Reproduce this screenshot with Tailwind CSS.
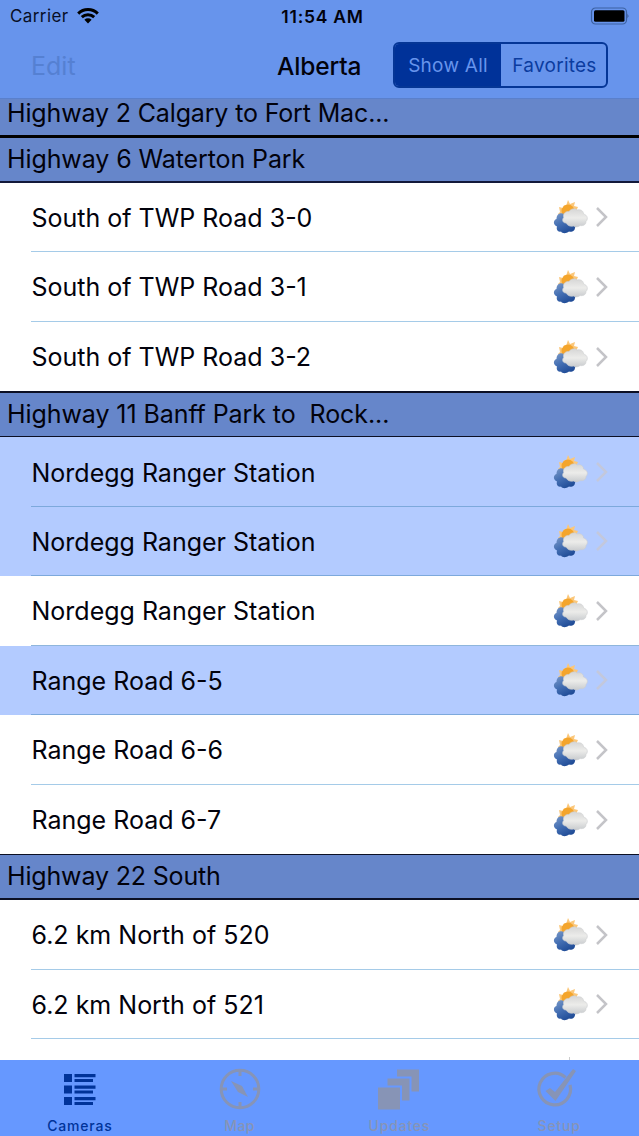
<!DOCTYPE html>
<html lang="en">
<head>
<meta charset="utf-8">
<title>Alberta</title>
<script src="https://cdn.jsdelivr.net/npm/@tailwindcss/browser@4"></script>
</head>
<body class="w-[639px] h-[1136px] overflow-hidden flex flex-col bg-white text-[#02020c] font-[Inter,sans-serif] text-[25px] leading-[30px]">
<svg class="absolute w-0 h-0">
  <defs>
    <linearGradient id="blue" x1="0" y1="0" x2="0.6" y2="1"><stop offset="0" stop-color="#7d9bc8"/><stop offset=".5" stop-color="#4570b4"/><stop offset="1" stop-color="#1f4b96"/></linearGradient>
    <linearGradient id="white" x1="0" y1="0" x2="0" y2="1"><stop offset="0" stop-color="#d6d6d6"/><stop offset=".5" stop-color="#ececea"/><stop offset="1" stop-color="#c8cbce"/></linearGradient>
    <symbol id="weather" viewBox="0 0 36 36">
      <path d="M16 1l2 4 5-2-1 4 4 1-2 4 1 5-16 6-1-6-2-2 2-2-1-5 4 1 1-3 2 1z" fill="#fbc77a"/>
      <circle cx="16" cy="12" r="6.500" fill="#f4a52c"/>
      <path d="M5 27.500c-4-1.500-4-6.500-.5-7.500 0-5 4-7 7.500-5 5-2 9 1 9 4 4 2 5 7 2 9.500 0 4-4 5-6 4-3 2.500-7 2-8 0-3 1-5-2-4-5z" fill="url(#blue)"/>
      <path d="M14 24c-4 0-4-4-2.300-5.500-1.200-4 2.300-6.500 5.300-6 2-3 6-3.500 8-1.500 3-1 6.500.5 6.500 4 4 1 5 5 2.500 7.500 0 4-4 4.500-6 4-2 2-5 1.500-6.500.5-3 1-6-.5-7.500-3z" fill="url(#white)" stroke="#cdcfd0" stroke-width=".6"/>
    </symbol>
    <symbol id="chev" viewBox="0 0 14 22"><path d="M2 2l9 9-9 9" fill="none" stroke="currentColor" stroke-width="2.5"/></symbol>
  </defs>
</svg>

<header class="h-[99px] shrink-0 bg-[#6794ec] border-b border-[#5a80cc] flex flex-col">
  <div class="h-8 flex items-center px-2.5 text-[17px] leading-5">
    <div class="flex-1 flex items-center gap-2">
      <span class="tracking-[0.4px] text-[#080f26]">Carrier</span>
      <svg class="w-[22px] h-4" viewBox="0 0 22 16" fill="none" stroke="#000" stroke-width="3"><path d="M1.2 5.6a14 14 0 0 1 19.6 0M4.8 9.2a9 9 0 0 1 12.4 0"/><path d="M7.4 11.8a5.2 5.2 0 0 1 7.2 0L11 15.5z" fill="#000" stroke="none"/></svg>
    </div>
    <span class="pl-1.5 pt-px font-semibold text-[17.5px] tracking-[0.75px]">11:54 AM</span>
    <div class="flex-1 flex justify-end"><svg class="w-10 h-[18px]" viewBox="0 0 40 18"><rect x="2.5" y="1" width="35" height="16" rx="4" fill="none" stroke="#3c61a2" stroke-width="1.2"/><rect x="5" y="3.3" width="30.5" height="11.5" rx="1.5"/><path d="M38.7 6.5q1.3 2.5 0 5z" fill="#16284c"/></svg></div>
  </div>
  <div class="flex items-center h-[66px] pl-[31px] pr-[31px]">
    <span class="w-[246px] pt-px text-[#5580d2]">Edit</span>
    <span class="w-[116px] pt-px font-medium text-[24.5px] tracking-[-0.15px]">Alberta</span>
    <div class="w-[215px] h-[46px] flex rounded-[6px] border-2 border-[#053696] overflow-hidden text-[19px] text-[#0b3c9f]">
      <span class="w-[106px] bg-[#003299] text-[#6794ec] flex items-center justify-center tracking-[0.25px] pt-0.5">Show All</span>
      <span class="flex-1 flex items-center justify-center tracking-[0.25px] pt-0.5 pl-0.5">Favorites</span>
    </div>
  </div>
</header>

<main class="flex-1 min-h-0 overflow-hidden">
  <h2 class="h-[36px] bg-[#6686ca] pl-[7px] leading-[28px] whitespace-pre tracking-[-0.15px]">Highway 2 Calgary to Fort Mac...</h2>
  <h2 class="h-[48px] bg-[#6686ca] pl-[7px] leading-[42px] border-t-3 border-b-2 border-t-black border-b-[#12193a] tracking-[-0.1px]">Highway 6 Waterton Park</h2>
  <ul>
    <li class="h-[69px] pl-[31px] flex"><div class="flex-1 flex items-center border-b border-[#a5cbe8] pr-[30px]"><span class="flex-1 pt-0.5 pl-[0.5px]">South of TWP Road 3-0</span><svg class="w-9 h-9 mr-[7px]"><use href="#weather"/></svg><svg class="w-3.5 h-[22px] text-[#c4c4c8]"><use href="#chev"/></svg></div></li>
    <li class="h-[70px] pl-[31px] flex"><div class="flex-1 flex items-center border-b border-[#a5cbe8] pr-[30px]"><span class="flex-1 pt-px pl-[0.5px]">South of TWP Road 3-1</span><svg class="w-9 h-9 mr-[7px]"><use href="#weather"/></svg><svg class="w-3.5 h-[22px] text-[#c4c4c8]"><use href="#chev"/></svg></div></li>
    <li class="h-[69px] pl-[31px] flex"><div class="flex-1 flex items-center pr-[30px]"><span class="flex-1 pl-[0.5px]">South of TWP Road 3-2</span><svg class="w-9 h-9 mr-[7px]"><use href="#weather"/></svg><svg class="w-3.5 h-[22px] text-[#c4c4c8]"><use href="#chev"/></svg></div></li>
  </ul>
  <h2 class="h-[46px] bg-[#6686ca] pl-[7px] leading-[43px] border-t-2 border-b border-[#0c1024] whitespace-pre tracking-[-0.08px]">Highway 11 Banff Park to  Rock...</h2>
  <ul>
    <li class="h-[70px] pl-[31px] flex bg-[#b3cbff]"><div class="flex-1 flex items-center border-b border-[#7da9dc] pr-[30px]"><span class="flex-1 pt-0.5 pl-[0.5px]">Nordegg Ranger Station</span><svg class="w-9 h-9 mr-[7px]"><use href="#weather"/></svg><svg class="w-3.5 h-[22px] text-[#c3c8dc]"><use href="#chev"/></svg></div></li>
    <li class="h-[69px] pl-[31px] flex bg-[#b3cbff]"><div class="flex-1 flex items-center border-b border-[#7da9dc] pr-[30px]"><span class="flex-1 pt-0.5 pl-[0.5px]">Nordegg Ranger Station</span><svg class="w-9 h-9 mr-[7px]"><use href="#weather"/></svg><svg class="w-3.5 h-[22px] text-[#c3c8dc]"><use href="#chev"/></svg></div></li>
    <li class="h-[70px] pl-[31px] flex"><div class="flex-1 flex items-center border-b border-[#8fb6dc] pr-[30px]"><span class="flex-1 pt-px pl-[0.5px]">Nordegg Ranger Station</span><svg class="w-9 h-9 mr-[7px]"><use href="#weather"/></svg><svg class="w-3.5 h-[22px] text-[#c4c4c8]"><use href="#chev"/></svg></div></li>
    <li class="h-[69px] pl-[31px] flex bg-[#b3cbff]"><div class="flex-1 flex items-center border-b border-[#7da9dc] pr-[30px]"><span class="flex-1 pt-0.5 pl-[0.5px]">Range Road 6-5</span><svg class="w-9 h-9 mr-[7px]"><use href="#weather"/></svg><svg class="w-3.5 h-[22px] text-[#c3c8dc]"><use href="#chev"/></svg></div></li>
    <li class="h-[70px] pl-[31px] flex"><div class="flex-1 flex items-center border-b border-[#a5cbe8] pr-[30px]"><span class="flex-1 pt-px pl-[0.5px]">Range Road 6-6</span><svg class="w-9 h-9 mr-[7px]"><use href="#weather"/></svg><svg class="w-3.5 h-[22px] text-[#c4c4c8]"><use href="#chev"/></svg></div></li>
    <li class="h-[69px] pl-[31px] flex"><div class="flex-1 flex items-center pr-[30px]"><span class="flex-1 pl-[0.5px]">Range Road 6-7</span><svg class="w-9 h-9 mr-[7px]"><use href="#weather"/></svg><svg class="w-3.5 h-[22px] text-[#c4c4c8]"><use href="#chev"/></svg></div></li>
  </ul>
  <h2 class="h-[46px] bg-[#6686ca] pl-[7px] leading-[43px] border-t border-b-2 border-[#0c1024] tracking-[-0.16px]">Highway 22 South</h2>
  <ul>
    <li class="h-[70px] pl-[31px] flex"><div class="flex-1 flex items-center border-b border-[#a5cbe8] pr-[30px]"><span class="flex-1 pt-px pl-[0.5px]">6.2 km North of 520</span><svg class="w-9 h-9 mr-[7px]"><use href="#weather"/></svg><svg class="w-3.5 h-[22px] text-[#c4c4c8]"><use href="#chev"/></svg></div></li>
    <li class="h-[69px] pl-[31px] flex"><div class="flex-1 flex items-center border-b border-[#a5cbe8] pr-[30px]"><span class="flex-1 pt-0.5 pl-[0.5px]">6.2 km North of 521</span><svg class="w-9 h-9 mr-[7px]"><use href="#weather"/></svg><svg class="w-3.5 h-[22px] text-[#c4c4c8]"><use href="#chev"/></svg></div></li>
    <li class="h-[21px] flex justify-end items-end pr-[69px]"><span class="w-px h-[3px] bg-[#cdcdcd]"></span></li>
  </ul>
</main>

<nav class="h-[76px] shrink-0 bg-[#6698ff] grid grid-cols-4 text-[14px] leading-[18px] font-medium text-[#8794b6]">
  <div class="flex flex-col items-center text-[#003399]">
    <svg class="w-12 h-14" viewBox="0 0 48 56" fill="currentColor"><path d="M8 14h8v8H8zM8 25.500h8v8H8zM8 37h8v8H8zM18.500 14h21v3.200h-21zM18.500 19h18.500v3h-18.500zM18.500 25.500h21v3.200h-21zM18.500 30.500h18.500v3h-18.500zM18.500 37h21v3.200h-21zM18.500 42h18.500v3h-18.500z"/></svg>
    <span class="tracking-[0.8px] pt-px">Cameras</span>
  </div>
  <div class="flex flex-col items-center">
    <svg class="w-12 h-14" viewBox="0 0 48 56" fill="none" stroke="currentColor"><circle cx="24" cy="29" r="18.800" stroke-width="3"/><path d="M24 10v6M24 42v6M5 29h6M37 29h6" stroke-width="3"/><path d="M15 21l11 5 6 11-10-5z" fill="currentColor" stroke="none"/></svg>
    <span class="tracking-[0.4px] pt-px">Map</span>
  </div>
  <div class="flex flex-col items-center">
    <svg class="w-12 h-14" viewBox="0 0 48 56" fill="currentColor"><path d="M3 27.500h22v22H3zM12.500 18.500h22v22H27V25.500H12.500zM22 9.500h22v22h-7.500V16.500H22z"/></svg>
    <span class="tracking-[0.8px] pt-px">Updates</span>
  </div>
  <div class="flex flex-col items-center">
    <svg class="w-12 h-14" viewBox="0 0 48 56" fill="none" stroke="currentColor"><path d="M30.500 17.500a15.800 15.800 0 1 0 4.500 7.500" stroke-width="3.200"/><path d="M10.500 31l4.500-3 5 4L38 9l3 2L20.500 41z" fill="currentColor" stroke="none"/></svg>
    <span class="tracking-[0.8px] pt-px">Setup</span>
  </div>
</nav>
</body>
</html>
